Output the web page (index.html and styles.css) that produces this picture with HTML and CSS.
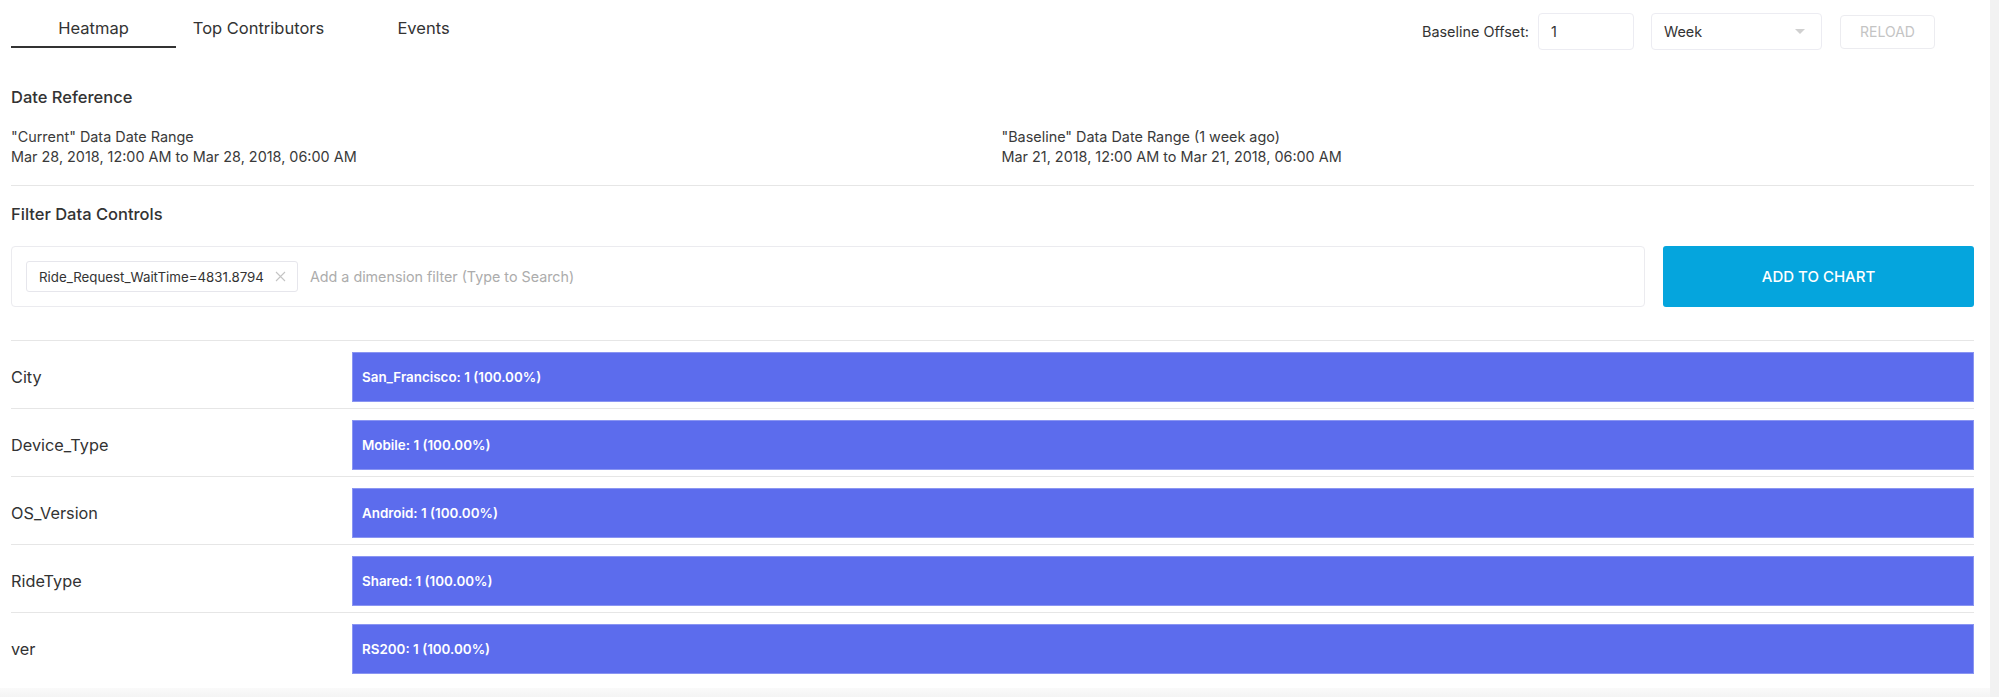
FILE: index.html
```html
<!DOCTYPE html>
<html lang="en">
<head>
    <meta charset="UTF-8">
    <meta name="viewport" content="width=device-width, initial-scale=1.0">
    <title>Heatmap</title>
    <link rel="stylesheet" href="styles.css">
</head>
<body>
    <div class="layout">
        <div class="page">
            <header class="top-bar">
                <nav class="tabs">
                    <div class="tab active">Heatmap</div>
                    <div class="tab">Top Contributors</div>
                    <div class="tab">Events</div>
                </nav>
                <div class="offset-controls">
                    <label class="offset-label" for="offset">Baseline Offset:</label>
                    <div class="field offset-input" id="offset">1</div>
                    <div class="field offset-unit">
                        <span>Week</span>
                        <span class="caret"></span>
                    </div>
                    <button class="reload-btn">RELOAD</button>
                </div>
            </header>

            <section class="date-ref">
                <h3 class="section-title">Date Reference</h3>
                <div class="date-grid">
                    <div class="date-col">
                        <div>"Current" Data Date Range</div>
                        <div>Mar 28, 2018, 12:00 AM to Mar 28, 2018, 06:00 AM</div>
                    </div>
                    <div class="date-col">
                        <div>"Baseline" Data Date Range (1 week ago)</div>
                        <div>Mar 21, 2018, 12:00 AM to Mar 21, 2018, 06:00 AM</div>
                    </div>
                </div>
            </section>

            <section class="filters">
                <h3 class="section-title">Filter Data Controls</h3>
                <div class="filter-row">
                    <div class="filter-box">
                        <span class="chip">
                            Ride_Request_WaitTime=4831.8794
                            <svg class="chip-close" width="11" height="11" viewBox="0 0 11 11">
                                <path d="M1 1 L10 10 M10 1 L1 10" stroke="#c4c4c4" stroke-width="1.1" fill="none"/>
                            </svg>
                        </span>
                        <span class="placeholder">Add a dimension filter (Type to Search)</span>
                    </div>
                    <button class="add-btn">ADD TO CHART</button>
                </div>
            </section>

            <section class="heatmap">
                <div class="hm-row">
                    <div class="hm-label">City</div>
                    <div class="hm-bars">
                        <div class="hm-bar" style="width: 100%">San_Francisco: 1 (100.00%)</div>
                    </div>
                </div>
                <div class="hm-row">
                    <div class="hm-label">Device_Type</div>
                    <div class="hm-bars">
                        <div class="hm-bar" style="width: 100%">Mobile: 1 (100.00%)</div>
                    </div>
                </div>
                <div class="hm-row">
                    <div class="hm-label">OS_Version</div>
                    <div class="hm-bars">
                        <div class="hm-bar" style="width: 100%">Android: 1 (100.00%)</div>
                    </div>
                </div>
                <div class="hm-row">
                    <div class="hm-label">RideType</div>
                    <div class="hm-bars">
                        <div class="hm-bar" style="width: 100%">Shared: 1 (100.00%)</div>
                    </div>
                </div>
                <div class="hm-row">
                    <div class="hm-label">ver</div>
                    <div class="hm-bars">
                        <div class="hm-bar" style="width: 100%">RS200: 1 (100.00%)</div>
                    </div>
                </div>
            </section>
            <div class="page-foot"></div>
        </div>
        <div class="scroll-track"></div>
    </div>
</body>
</html>
```

FILE: styles.css
```css
body, html {
    font-family: Inter, "Noto Sans", sans-serif;
    color: #333;
    background-color: #fff;
    margin: 0;
    padding: 0;
    height: 100%;
    overflow: hidden;
}
.layout {
    display: flex;
    height: 100%;
}
.page {
    flex: 1;
    display: flex;
    flex-direction: column;
    padding: 0 16px 0 11px;
}
.scroll-track {
    width: 9px;
    background-color: #f2f2f2;
}

/* top bar */
.top-bar {
    display: flex;
    justify-content: space-between;
    align-items: flex-start;
    height: 48px;
}
.tabs {
    display: flex;
}
.tab {
    width: 165px;
    text-align: center;
    font-size: 16.5px;
    line-height: 20px;
    padding: 18px 0 8px;
    border-bottom: 2px solid transparent;
    color: #333;
}
.tab.active {
    border-bottom-color: #333;
}
.offset-controls {
    display: flex;
    align-items: center;
    padding-top: 13px;
    padding-right: 39px;
}
.offset-label {
    font-size: 14.4px;
    margin-right: 9px;
}
.field {
    box-sizing: border-box;
    height: 37px;
    border: 1px solid #ececf2;
    border-radius: 4px;
    display: flex;
    align-items: center;
    padding: 0 12px;
    font-size: 14.4px;
}
.offset-input {
    width: 96px;
}
.offset-unit {
    width: 171px;
    margin-left: 17px;
    justify-content: space-between;
}
.caret {
    width: 0;
    height: 0;
    border-left: 5px solid transparent;
    border-right: 5px solid transparent;
    border-top: 5px solid #d0d0d0;
    margin-right: 4px;
}
.reload-btn {
    box-sizing: border-box;
    width: 95px;
    height: 34px;
    margin-left: 18px;
    border: 1px solid #ececf0;
    border-radius: 4px;
    background: #fff;
    color: #c4c4c4;
    font-family: inherit;
    font-size: 14px;
}

/* date reference */
.section-title {
    margin: 0;
    font-size: 16.5px;
    font-weight: 500;
    line-height: 20px;
}
.date-ref {
    padding-top: 39px;
    padding-bottom: 18px;
    border-bottom: 1px solid #e6e6e6;
}
.date-grid {
    display: grid;
    grid-template-columns: 1fr 1fr;
    gap: 18px;
    margin-top: 20px;
    font-size: 14.4px;
    line-height: 20px;
    color: #3a3a3a;
}

/* filters */
.filters {
    padding-top: 18px;
    padding-bottom: 33px;
}
.filter-row {
    display: flex;
    gap: 18px;
    margin-top: 22px;
    height: 61px;
}
.filter-box {
    flex: 1;
    box-sizing: border-box;
    border: 1px solid #ebebef;
    border-radius: 4px;
    display: flex;
    align-items: center;
    padding-left: 14px;
}
.chip {
    box-sizing: border-box;
    height: 31px;
    display: flex;
    align-items: center;
    padding: 0 11px 0 12px;
    border: 1px solid #e6e6ec;
    border-radius: 3px;
    font-size: 13.3px;
    color: #333;
}
.chip-close {
    margin-left: 11px;
}
.placeholder {
    margin-left: 12px;
    font-size: 14.3px;
    color: #acacac;
}
.add-btn {
    width: 311px;
    border: none;
    border-radius: 3px;
    background-color: #05a5dd;
    color: #fff;
    font-family: inherit;
    font-size: 15px;
    font-weight: 500;
}

/* heatmap rows */
.hm-row {
    display: flex;
    align-items: center;
    border-top: 1px solid #e6e6e6;
    padding: 11px 0 6px;
}
.hm-label {
    width: 341px;
    font-size: 16.3px;
}
.hm-bars {
    flex: 1;
    display: flex;
}
.hm-bar {
    box-sizing: border-box;
    height: 50px;
    display: flex;
    align-items: center;
    padding-left: 9px;
    background-color: #5c6ced;
    border: 1px solid #8a95f2;
    color: #fff;
    font-size: 13.4px;
    font-weight: 600;
}
.page-foot {
    flex: 1;
    margin: 8px -16px 0 -11px;
    background: linear-gradient(#fafafa, #f4f4f4);
}
```
